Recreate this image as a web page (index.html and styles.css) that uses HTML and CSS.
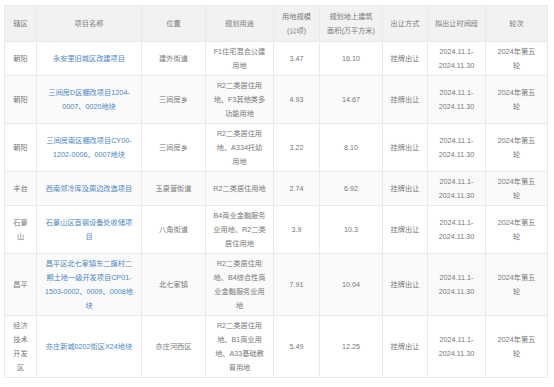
FILE: index.html
```html
<!DOCTYPE html>
<html lang="zh">
<head>
<meta charset="utf-8">
<link rel="stylesheet" href="styles.css">
</head>
<body>
<table class="land">
  <colgroup>
    <col class="c1"><col class="c2"><col class="c3"><col class="c4"><col class="c5"><col class="c6"><col class="c7"><col class="c8"><col class="c9">
  </colgroup>
  <thead>
    <tr>
      <th>辖区</th><th>项目名称</th><th>位置</th><th>规划用途</th><th>用地规模<br>(公顷)</th><th>规划地上建筑<br>面积(万平方米)</th><th>出让方式</th><th>拟出让时间段</th><th>轮次</th>
    </tr>
  </thead>
  <tbody>
    <tr>
      <td>朝阳</td><td class="link">永安里旧城区改建项目</td><td>建外街道</td><td>F1住宅混合公建<br>用地</td><td>3.47</td><td>16.10</td><td>挂牌出让</td><td>2024.11.1-<br>2024.11.30</td><td>2024年第五<br>轮</td>
    </tr>
    <tr>
      <td>朝阳</td><td class="link">三间房D区棚改项目1204-<br>0007、0020地块</td><td>三间房乡</td><td>R2二类居住用<br>地、F3其他类多<br>功能用地</td><td>4.93</td><td>14.67</td><td>挂牌出让</td><td>2024.11.1-<br>2024.11.30</td><td>2024年第五<br>轮</td>
    </tr>
    <tr>
      <td>朝阳</td><td class="link">三间房南区棚改项目CY00-<br>1202-0006、0007地块</td><td>三间房乡</td><td>R2二类居住用<br>地、A334托幼<br>用地</td><td>3.22</td><td>8.10</td><td>挂牌出让</td><td>2024.11.1-<br>2024.11.30</td><td>2024年第五<br>轮</td>
    </tr>
    <tr>
      <td>丰台</td><td class="link">西南郊冷库及周边改造项目</td><td>玉泉营街道</td><td>R2二类居住用地</td><td>2.74</td><td>6.92</td><td>挂牌出让</td><td>2024.11.1-<br>2024.11.30</td><td>2024年第五<br>轮</td>
    </tr>
    <tr>
      <td>石景<br>山</td><td class="link">石景山区首钢设备处收储项<br>目</td><td>八角街道</td><td>B4商业金融服务<br>业用地、R2二类<br>居住用地</td><td>3.9</td><td>10.3</td><td>挂牌出让</td><td>2024.11.1-<br>2024.11.30</td><td>2024年第五<br>轮</td>
    </tr>
    <tr>
      <td>昌平</td><td class="link">昌平区北七家镇东二旗村二<br>期土地一级开发项目CP01-<br>1503-0002、0009、0008地<br>块</td><td>北七家镇</td><td>R2二类居住用<br>地、B4综合性商<br>业金融服务业用<br>地</td><td>7.91</td><td>10.04</td><td>挂牌出让</td><td>2024.11.1-<br>2024.11.30</td><td>2024年第五<br>轮</td>
    </tr>
    <tr>
      <td>经济<br>技术<br>开发<br>区</td><td class="link">亦庄新城0202街区X24地块</td><td>亦庄河西区</td><td>R2二类居住用<br>地、B1商业用<br>地、A33基础教<br>育用地</td><td>5.49</td><td>12.25</td><td>挂牌出让</td><td>2024.11.1-<br>2024.11.30</td><td>2024年第五<br>轮</td>
    </tr>
  </tbody>
</table>
</body>
</html>
```

FILE: styles.css
```css
html, body {
  margin: 0;
  padding: 0;
  background: #ffffff;
}
body {
  padding: 5px 0 0 4px;
  font-family: "Liberation Sans", "Noto Sans CJK SC", sans-serif;
  font-size: 7.2px;
  color: #777777;
}
.land {
  border-collapse: collapse;
  table-layout: fixed;
  width: 543px;
}
.c1 { width: 32px; }
.c2 { width: 105px; }
.c3 { width: 64px; }
.c4 { width: 68px; }
.c5 { width: 46px; }
.c6 { width: 63px; }
.c7 { width: 45px; }
.c8 { width: 58px; }
.c9 { width: 62px; }
.land th,
.land td {
  border: 1px solid #e9e9e9;
  text-align: center;
  vertical-align: middle;
  line-height: 14px;
  padding: 2.5px 1px;
  white-space: nowrap;
  font-weight: normal;
}
.land th {
  background: #f2f2f2;
  padding: 3.5px 1px;
  color: #7a7a7a;
}
.land tbody tr:nth-child(even) td {
  background: #fafafa;
}
.land td.link {
  color: #4a86c3;
}
```
